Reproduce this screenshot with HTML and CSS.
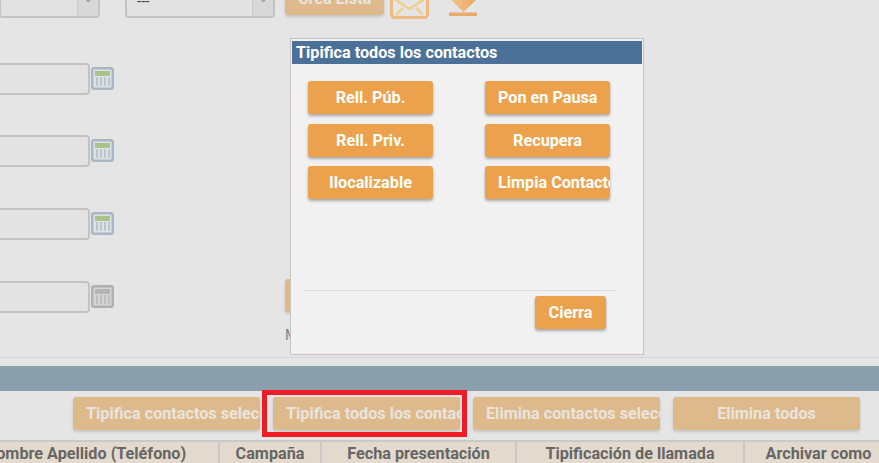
FILE: index.html
```html
<!DOCTYPE html>
<html lang="es">
<head>
  <meta charset="UTF-8" />
  <title>Tipifica todos los contactos</title>
  <link rel="stylesheet" href="styles.css">
</head>
<body>
  <div class="page">

    <div class="filters">
      <div class="top-row">
        <div class="select select-first"><span class="select-value"></span><span class="select-arrow">&#8964;</span></div>
        <div class="select select-second"><span class="select-value">---</span><span class="select-arrow">&#8964;</span></div>
        <button class="btn btn-off btn-list">Crea Lista</button>
        <svg class="icon-mail" width="40" height="34" viewBox="0 0 40 34">
          <rect x="1.5" y="1.5" width="36" height="31" rx="3" fill="none" stroke="#ecbb84" stroke-width="3"/>
          <path d="M3 13 L19.5 24 L36 13" fill="none" stroke="#efd08c" stroke-width="2.5"/>
          <path d="M6 30 L13 23 M33 30 L26 23" fill="none" stroke="#efd08c" stroke-width="2.5"/>
        </svg>
        <svg class="icon-down" width="30" height="32" viewBox="0 0 30 32">
          <defs>
            <linearGradient id="downFill" x1="0" y1="0" x2="1" y2="0">
              <stop offset="0" stop-color="#f3c595"/>
              <stop offset="1" stop-color="#eda75c"/>
            </linearGradient>
          </defs>
          <path d="M1 4 H28 V15 L14.5 28 L1 15 Z" fill="url(#downFill)"/>
          <rect x="0" y="28.5" width="28" height="3.5" fill="#e8ab6c"/>
        </svg>
      </div>

      <div class="date-row">
        <div class="date-input"></div>
        <svg class="icon-cal" width="23" height="23" viewBox="0 0 23 23">
          <rect x="1.2" y="1.2" width="20.6" height="20.6" rx="2" fill="#dfe2e5" stroke="#a7b7c5" stroke-width="2.5"/>
          <rect x="4" y="4" width="15" height="5" fill="#a9c48b"/>
          <path d="M6 10 V19 M10 10 V19 M14 10 V19 M18 10 V19" stroke="#b3bcc5" stroke-width="1.5"/>
        </svg>
      </div>
      <div class="date-row">
        <div class="date-input"></div>
        <svg class="icon-cal" width="23" height="23" viewBox="0 0 23 23">
          <rect x="1.2" y="1.2" width="20.6" height="20.6" rx="2" fill="#dfe2e5" stroke="#a7b7c5" stroke-width="2.5"/>
          <rect x="4" y="4" width="15" height="5" fill="#a9c48b"/>
          <path d="M6 10 V19 M10 10 V19 M14 10 V19 M18 10 V19" stroke="#b3bcc5" stroke-width="1.5"/>
        </svg>
      </div>
      <div class="date-row">
        <div class="date-input"></div>
        <svg class="icon-cal" width="23" height="23" viewBox="0 0 23 23">
          <rect x="1.2" y="1.2" width="20.6" height="20.6" rx="2" fill="#dfe2e5" stroke="#a7b7c5" stroke-width="2.5"/>
          <rect x="4" y="4" width="15" height="5" fill="#a9c48b"/>
          <path d="M6 10 V19 M10 10 V19 M14 10 V19 M18 10 V19" stroke="#b3bcc5" stroke-width="1.5"/>
        </svg>
      </div>
      <div class="date-row">
        <div class="date-input"></div>
        <svg class="icon-cal" width="23" height="23" viewBox="0 0 23 23">
          <rect x="1.2" y="1.2" width="20.6" height="20.6" rx="2" fill="#d5d5d5" stroke="#b0b0b0" stroke-width="2.5"/>
          <rect x="4" y="4" width="15" height="5" fill="#b4b4b4"/>
          <path d="M6 10 V19 M10 10 V19 M14 10 V19 M18 10 V19" stroke="#b8b8b8" stroke-width="1.5"/>
        </svg>
        <div class="side-col">
          <button class="btn btn-off btn-side"></button>
          <span class="side-text">M</span>
        </div>
      </div>
    </div>

    <div class="band"></div>

    <div class="actions">
      <button class="btn btn-off btn-action">Tipifica contactos seleccionados</button>
      <button class="btn btn-off btn-action">Tipifica todos los contactos</button>
      <button class="btn btn-off btn-action">Elimina contactos seleccionados</button>
      <button class="btn btn-off btn-action">Elimina todos</button>
    </div>

    <div class="table-head">
      <div class="col">Nombre Apellido (Teléfono)</div>
      <div class="col">Campaña</div>
      <div class="col">Fecha presentación</div>
      <div class="col">Tipificación de llamada</div>
      <div class="col">Archivar como</div>
    </div>

    <!-- ventana modal -->
    <div class="modal">
      <div class="modal-title">Tipifica todos los contactos</div>
      <div class="modal-grid">
        <button class="btn btn-on">Rell. Púb.</button>
        <button class="btn btn-on">Pon en Pausa</button>
        <button class="btn btn-on">Rell. Priv.</button>
        <button class="btn btn-on">Recupera</button>
        <button class="btn btn-on">Ilocalizable</button>
        <button class="btn btn-on">Limpia Contactos</button>
      </div>
      <div class="modal-foot">
        <button class="btn btn-on btn-close">Cierra</button>
      </div>
    </div>

    <!-- marca roja -->
    <div class="highlight"></div>
  </div>
</body>
</html>
```

FILE: styles.css
```css
body {
  margin: 0;
  font-family: Roboto, sans-serif;
}

.page {
  position: relative;
  width: 879px;
  height: 463px;
  overflow: hidden;
  background-color: #e5e5e5;
}

/* BUTTONS */
.btn {
  display: block;
  height: 33px;
  padding: 0 13px;
  border: none;
  border-radius: 3px;
  font-family: Roboto, sans-serif;
  font-size: 16.2px;
  font-weight: 700;
  text-align: center;
  white-space: nowrap;
  overflow: hidden;
}

.btn-on {
  background-color: #eca24c;
  color: #fff;
  box-shadow: 0 2px 3px rgba(0, 0, 0, 0.3);
}

.btn-off {
  background-color: #deb98c;
  color: #e9e4de;
  box-shadow: 0 2px 3px rgba(0, 0, 0, 0.14);
}

/* FILTERS */
.filters {
  display: flex;
  flex-direction: column;
  height: 358px;
  box-sizing: border-box;
  border-bottom: 1px solid #d5d5d5;
}

.top-row {
  display: flex;
  flex: none;
  align-items: flex-start;
  height: 36px;
  margin-top: -18px;
  margin-bottom: 44.6px;
}

.select {
  display: flex;
  box-sizing: border-box;
  height: 33px;
  margin-top: 3px;
  border: 2px solid #c3c3c3;
  border-top: none;
  border-radius: 4px;
  background-color: #e2e2e2;
}

.select-first {
  width: 101px;
  margin-left: -1px;
}

.select-second {
  width: 150px;
  margin-left: 25px;
}

.select-value {
  flex: 1;
  padding-left: 10px;
  font-size: 15px;
  line-height: 33px;
  color: #444;
}

.select-arrow {
  width: 20px;
  border-left: 1px solid #c9c9c9;
  background-color: #d8d8d8;
  font-size: 10px;
  line-height: 28px;
  text-align: center;
  color: #888;
}

.btn-list {
  width: 99px;
  margin-left: 10px;
  border-radius: 4px;
}

.icon-mail {
  flex: none;
  margin-left: 6px;
  margin-top: 3px;
}

.icon-down {
  flex: none;
  margin-left: 19px;
  margin-top: 2px;
}

.date-row {
  display: flex;
  flex: none;
  align-items: flex-start;
  height: 31px;
  margin-bottom: 41.7px;
}

.date-input {
  box-sizing: border-box;
  width: 90px;
  height: 32px;
  border: 2px solid #c3c3c3;
  border-left: none;
  border-radius: 0 4px 4px 0;
  background-color: #e3e3e3;
}

.icon-cal {
  margin: 4px 0 0 1px;
}

.side-col {
  display: flex;
  flex-direction: column;
  margin: -2px 0 0 171px;
}

.btn-side {
  width: 60px;
  margin-bottom: 15px;
}

.side-text {
  font-size: 14px;
  color: #6f84a3;
}

/* BAND */
.band {
  height: 25px;
  margin-top: 8px;
  background-color: #8c9fad;
}

.actions {
  display: flex;
  justify-content: flex-end;
  gap: 13px;
  padding: 6px 19px 0 0;
  height: 43px;
}

.btn-action {
  width: 187px;
}

/* TABLE */
.table-head {
  display: grid;
  grid-template-columns: 267px 102px 195px 228px 149px;
  width: 941px;
  height: 22px;
  margin-left: -47px;
  border-top: 2px solid #c9c9c9;
  background-color: #e3dacd;
}

.col {
  border-right: 2px solid #c9c9c9;
  font-size: 16.2px;
  font-weight: 700;
  line-height: 24px;
  text-align: center;
  white-space: nowrap;
  color: #666;
}

/* MODAL */
.modal {
  position: absolute;
  left: 290px;
  top: 38px;
  box-sizing: border-box;
  width: 354px;
  height: 317px;
  padding: 2px 1px 1px;
  border: 1px solid #c8c3bb;
  background-color: #f1f1f1;
}

.modal-title {
  height: 23px;
  padding-left: 4px;
  background-color: #4b7198;
  color: #fff;
  font-size: 16.2px;
  font-weight: 700;
  line-height: 24px;
}

.modal-grid {
  display: grid;
  grid-template-columns: 125px 125px;
  grid-auto-rows: 33px;
  column-gap: 52px;
  row-gap: 9.5px;
  height: 118px;
  padding: 17px 0 0 16px;
}

.modal-foot {
  display: flex;
  justify-content: flex-end;
  height: 40px;
  margin: 91px 25px 0 12px;
  padding: 5px 11px 0 0;
  border-top: 1px solid #dcdcdc;
}

.btn-close {
  width: 71px;
}

.highlight {
  position: absolute;
  left: 262px;
  top: 390px;
  box-sizing: border-box;
  width: 205px;
  height: 47px;
  border: 5px solid #ee1c25;
}
```
